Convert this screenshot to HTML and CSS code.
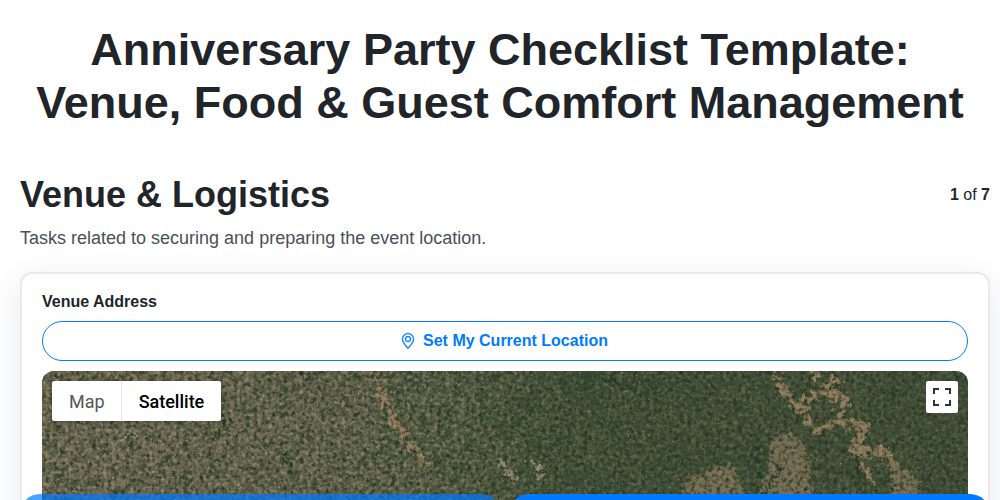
FILE: index.html
```html
<!DOCTYPE html>
<html lang="en">
<head>
<meta charset="utf-8">
<title>Anniversary Party Checklist Template</title>
<link rel="stylesheet" href="styles.css">
</head>
<body>
<main class="page">
  <h1 class="title">Anniversary Party Checklist Template:<br>Venue, Food &amp; Guest Comfort Management</h1>
  <header class="section-head">
    <h2 class="section-title">Venue &amp; Logistics</h2>
    <div class="pager"><b>1</b> of <b>7</b></div>
  </header>
  <p class="section-desc">Tasks related to securing and preparing the event location.</p>
  <section class="card">
    <label class="field-label">Venue Address</label>
    <button class="locate" type="button">
      <svg class="pin" viewBox="0 0 16 16" width="16" height="16" fill="currentColor" stroke="currentColor" stroke-width=".35" aria-hidden="true">
        <path d="M12.166 8.94c-.524 1.062-1.234 2.12-1.96 3.07A31.493 31.493 0 0 1 8 14.58a31.481 31.481 0 0 1-2.206-2.57c-.726-.95-1.436-2.008-1.96-3.07C3.304 7.867 3 6.862 3 6a5 5 0 0 1 10 0c0 .862-.305 1.867-.834 2.94zM8 16s6-5.686 6-10A6 6 0 0 0 2 6c0 4.314 6 10 6 10z"/>
        <path d="M8 8a2 2 0 1 1 0-4 2 2 0 0 1 0 4zm0 1a3 3 0 1 0 0-6 3 3 0 0 0 0 6z"/>
      </svg>
      <span>Set My Current Location</span>
    </button>
    <div class="map">
      <svg class="sat" viewBox="0 0 926 300" width="926" height="300" aria-hidden="true">
        <defs>
          <linearGradient id="base" x1="0" x2="1" y1="0" y2="0">
            <stop offset="0" stop-color="#716a55"/>
            <stop offset=".3" stop-color="#6b6751"/>
            <stop offset=".42" stop-color="#596046"/>
            <stop offset=".55" stop-color="#45523a"/>
            <stop offset="1" stop-color="#435039"/>
          </linearGradient>
          <linearGradient id="rightFade" x1="0" x2="1" y1="0" y2="0">
            <stop offset="0" stop-color="#333"/>
            <stop offset=".3" stop-color="#444"/>
            <stop offset=".5" stop-color="#ddd"/>
            <stop offset="1" stop-color="#fff"/>
          </linearGradient>
          <linearGradient id="leftFade" x1="0" x2="1" y1="0" y2="0">
            <stop offset="0" stop-color="#fff"/>
            <stop offset=".4" stop-color="#ddd"/>
            <stop offset=".58" stop-color="#777"/>
            <stop offset="1" stop-color="#666"/>
          </linearGradient>
          <mask id="leftMask"><rect width="926" height="300" fill="url(#leftFade)"/></mask>
          <mask id="rightMask"><rect width="926" height="300" fill="url(#rightFade)"/></mask>
          <filter id="patches" x="0" y="0" width="100%" height="100%" color-interpolation-filters="sRGB">
            <feTurbulence type="fractalNoise" baseFrequency=".03" numOctaves="4" seed="7"/>
            <feColorMatrix values="0 0 0 0 .2  0 0 0 0 .29  0 0 0 0 .2  2.6 0 0 0 -1.15"/>
          </filter>
          <filter id="mid" x="0" y="0" width="100%" height="100%" color-interpolation-filters="sRGB">
            <feTurbulence type="fractalNoise" baseFrequency=".085" numOctaves="3" seed="14"/>
            <feColorMatrix values="0 0 0 0 .2  0 0 0 0 .27  0 0 0 0 .18  2.4 0 0 0 -1.1"/>
          </filter>
          <filter id="speck" x="0" y="0" width="100%" height="100%" color-interpolation-filters="sRGB">
            <feTurbulence type="fractalNoise" baseFrequency=".24" numOctaves="3" seed="3"/>
            <feColorMatrix values="0 0 0 0 .15  0 0 0 0 .19  0 0 0 0 .12  2.4 0 0 0 -1"/>
          </filter>
          <filter id="speckl" x="0" y="0" width="100%" height="100%" color-interpolation-filters="sRGB">
            <feTurbulence type="fractalNoise" baseFrequency=".26" numOctaves="3" seed="11"/>
            <feColorMatrix values="0 0 0 0 .6  0 0 0 0 .56  0 0 0 0 .45  0 2.4 0 0 -1.08"/>
          </filter>
          <filter id="dots" x="0" y="0" width="100%" height="100%" color-interpolation-filters="sRGB">
            <feTurbulence type="fractalNoise" baseFrequency=".5" numOctaves="1" seed="31"/>
            <feColorMatrix values="0 0 0 0 .8  0 0 0 0 .78  0 0 0 0 .68  0 0 9 0 -6.7"/>
          </filter>
          <filter id="rough" x="-10%" y="-10%" width="120%" height="120%" color-interpolation-filters="sRGB">
            <feTurbulence type="fractalNoise" baseFrequency=".14" numOctaves="3" seed="5" result="n"/>
            <feDisplacementMap in="SourceGraphic" in2="n" scale="16" xChannelSelector="R" yChannelSelector="G"/>
            <feGaussianBlur stdDeviation=".7"/>
          </filter>
        </defs>
        <rect width="926" height="300" fill="url(#base)"/>
        <g mask="url(#rightMask)">
          <rect width="926" height="300" filter="url(#patches)"/>
        </g>
        <rect width="926" height="300" filter="url(#mid)"/>
        <g filter="url(#rough)" fill="none" stroke-linecap="round" stroke-linejoin="round">
          <path class="river" d="M331 4L348 42L365 72L385 92" stroke-width="5"/>
          <path class="tan" d="M735 8L755 36L781 19L805 29L795 49L825 56L811 79L845 82L865 116" stroke-width="9"/>
          <path class="tan" d="M755 36L775 60L795 49M781 19L795 8M735 8L730 -4M811 79L830 110M770 -2L775 8" stroke-width="6"/>
          <path class="tan-fill" d="M730 70L750 62L765 80L768 122L722 125Z"/>
          <path class="tan-fill" d="M650 108L690 94L702 125L640 125Z"/>
          <path class="tan-fill" d="M850 96L868 100L878 125L852 125Z"/>
          <path class="deep" d="M715 76L718 124M738 98L724 118M812 84L822 125" stroke-width="3"/>
          <path class="deep" d="M567 8L590 18" stroke-width="5"/>
          <path class="deep" d="M262 4L268 8M185 46L186 54M243 86L250 98M135 106L140 108" stroke-width="6"/>
          <path class="village" d="M458 92L475 110M490 88L500 106M75 70L90 62" stroke-width="5"/>
        </g>
        <rect width="926" height="300" filter="url(#speck)"/>
        <g mask="url(#leftMask)">
          <rect width="926" height="300" filter="url(#speckl)"/>
        </g>
        <rect width="926" height="300" filter="url(#dots)" opacity=".6"/>
      </svg>
      <div class="map-type">
        <span class="map-tab map-tab-off">Map</span>
        <span class="map-tab map-tab-on">Satellite</span>
      </div>
      <button class="fullscreen" type="button" aria-label="Toggle fullscreen view">
        <svg viewBox="0 0 18 18" width="18" height="18" aria-hidden="true">
          <path d="M0 6V0h6v2H2v4zM12 0h6v6h-2V2h-4zM0 12h2v4h4v2H0zM16 12h2v6h-6v-2h4z" fill="#333"/>
        </svg>
      </button>
    </div>
  </section>
</main>
<nav class="footer-actions">
  <div class="action action-soft"></div>
  <div class="action action-solid"></div>
</nav>
</body>
</html>
```
FILE: styles.css
```css
* { box-sizing: border-box; }
html, body { margin: 0; height: 500px; overflow: hidden; background: #fff; }
body { font-family: "Liberation Sans", Arial, sans-serif; color: #212529; }
.page { padding: 23px 10px 0 20px; height: 500px; overflow: hidden; }
.title { margin: 0 0 44px -10px; font-size: 45px; line-height: 53px; font-weight: 700; text-align: center; }
.section-head { display: flex; justify-content: space-between; align-items: center; }
.section-title { margin: 0; font-size: 36px; line-height: 43px; font-weight: 700; }
.pager { font-size: 16px; }
.section-desc { margin: 11px 0 23px; font-size: 18px; line-height: 22px; color: #495057; }
.card { height: 400px; padding: 18px 20px; background: #fff; border: 2px solid #e9e9ef; border-radius: 12px; box-shadow: 0 8px 32px rgba(31,38,135,.1); }
.field-label { display: block; margin-bottom: 10px; font-size: 16px; line-height: 19px; font-weight: 700; }
.locate { display: flex; justify-content: center; align-items: center; gap: 7px; width: 100%; height: 40px; margin-bottom: 10px; padding: 0 2px 0 0; background: #fff; color: #007bff; border: 1px solid #007bff; border-radius: 20px; font: 700 16px "Liberation Sans", Arial, sans-serif; }
.pin { display: block; }
.map { position: relative; height: 300px; border-radius: 12px; overflow: hidden; }
.sat { display: block; }
.river { stroke: #9a7c5c; }
.tan { stroke: #8f7c5c; }
.tan-fill { fill: #756e54; stroke: #756e54; stroke-width: 3; }
.deep { stroke: #263c2a; }
.village { stroke: #928c72; }
.map-type { position: absolute; top: 10px; left: 10px; display: flex; height: 40px; background: #fff; border-radius: 2px; box-shadow: 0 1px 4px rgba(0,0,0,.3); font-family: Roboto, sans-serif; font-size: 18px; }
.map-tab { display: flex; align-items: center; padding: 0 17px; color: #565656; }
.map-tab-off { padding-right: 16px; }
.map-tab-on { color: #000; font-weight: 500; border-left: 1px solid #e6e6e6; }
.fullscreen { position: absolute; top: 10px; right: 10px; display: flex; align-items: center; justify-content: center; width: 32px; height: 32px; padding: 0; background: #fff; border: 0; border-radius: 2px; }
.fullscreen svg { display: block; }
.footer-actions { position: fixed; top: 494px; left: 20px; right: 10px; display: flex; gap: 8px; }
.action { flex: 1; height: 46px; border-radius: 20px; }
.action-soft { background: #007bff; opacity: .7; }
.action-solid { background: #007bff; }
```
